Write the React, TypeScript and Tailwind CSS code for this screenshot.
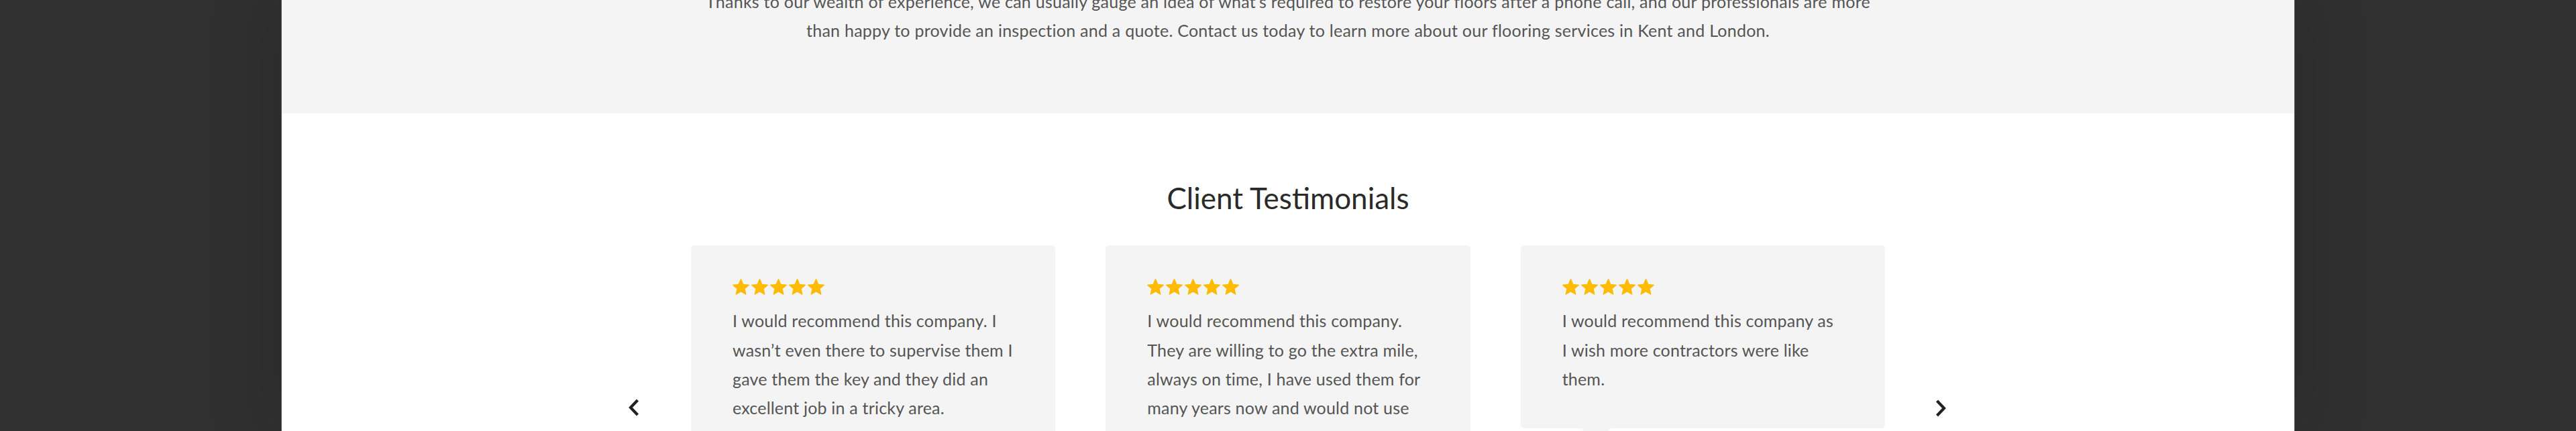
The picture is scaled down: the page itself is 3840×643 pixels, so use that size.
import React from "react";

const Star = () => (
  <svg width="25" height="24" viewBox="1.2 1.3 21.6 20.6" className="block">
    <path
      d="M12 17.27L18.18 21l-1.64-7.03L22 9.24l-7.19-.61L12 2 9.19 8.63 2 9.24l5.46 4.73L5.82 21z"
      fill="#ffbb00"
      stroke="#ffbb00"
      strokeWidth="1.4"
      strokeLinejoin="round"
    />
  </svg>
);

const Stars = () => (
  <div className="flex h-[25px] items-start gap-[3px]">
    <Star />
    <Star />
    <Star />
    <Star />
    <Star />
  </div>
);

const Card = ({ lines }: { lines: string[] }) => (
  <div className="relative flex-1 rounded-md bg-[#f4f4f4] px-[62px] pt-[50px] pb-[52px]">
    <Stars />
    <p className="mt-[16px] whitespace-nowrap text-[25px] leading-[43.3px] tracking-[0.2px] text-[#555]">
      {lines.map((l, i) => (
        <React.Fragment key={i}>
          {l}
          {i < lines.length - 1 && <br />}
        </React.Fragment>
      ))}
    </p>
    <div className="absolute left-[90px] top-full h-0 w-0 border-x-[22px] border-t-[22px] border-x-transparent border-t-[#f4f4f4]" />
  </div>
);

const Chevron = ({ dir }: { dir: "left" | "right" }) => (
  <svg width="18" height="28" viewBox="0 0 18 28" className="block">
    <path
      d={dir === "left" ? "M14.5 3 L4 14 L14.5 25" : "M3.5 3 L14 14 L3.5 25"}
      fill="none"
      stroke="#222"
      strokeWidth="4.2"
      strokeLinecap="butt"
      strokeLinejoin="miter"
    />
  </svg>
);

export default function App() {
  return (
    <div
      className="h-[643px] overflow-hidden bg-[#303030]"
      style={{ fontFamily: "Lato, 'Open Sans', sans-serif" }}
    >
      <div className="mx-auto h-full w-[3002px] border-x border-[#5e5e5e] bg-white shadow-[0_0_100px_10px_rgba(0,0,0,0.13)]">
        <section className="flex flex-col bg-[#f4f4f4] pb-[101px]">
          <p className="mx-auto -mt-[19px] w-[1780px] text-center text-[25px] leading-[43.3px] tracking-[0.25px] text-[#555]">
            Thanks to our wealth of experience, we can usually gauge an idea of what’s required to restore your floors after a phone call, and our professionals are more
            <br />
            than happy to provide an inspection and a quote. Contact us today to learn more about our flooring services in Kent and London.
          </p>
        </section>
        <section className="pt-[100px]">
          <h2 className="text-center text-[44px] leading-[52.8px] font-normal text-[#2a2a2a]">
            Client Testimonials
          </h2>
          <div className="relative mx-auto mt-[45px] flex w-[1780px] items-start gap-[75px]">
            <Card
              lines={[
                "I would recommend this company. I",
                "wasn’t even there to supervise them I",
                "gave them the key and they did an",
                "excellent job in a tricky area.",
              ]}
            />
            <Card
              lines={[
                "I would recommend this company.",
                "They are willing to go the extra mile,",
                "always on time, I have used them for",
                "many years now and would not use",
              ]}
            />
            <Card
              lines={[
                "I would recommend this company as",
                "I wish more contractors were like",
                "them.",
              ]}
            />
            <button className="absolute left-[-94px] top-[228px]">
              <Chevron dir="left" />
            </button>
            <button className="absolute right-[-92px] top-[229px]">
              <Chevron dir="right" />
            </button>
          </div>
        </section>
      </div>
    </div>
  );
}
